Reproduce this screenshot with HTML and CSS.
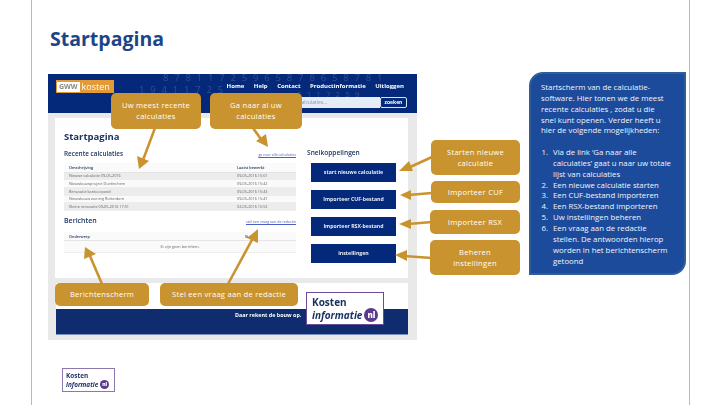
FILE: index.html
```html
<!DOCTYPE html>
<html lang="nl">
<head>
  <meta charset="UTF-8">
  <title>Startpagina</title>
  <link rel="stylesheet" href="styles.css">
</head>
<body>
<div class="slide">
  <h1 class="slide-title">Startpagina</h1>

  <div class="shot">
    <div class="shot-head">
      <div class="digits">
        <span>8 7 8 1 1 7 2 5 9 6 5 8 7 8 6 5 8 7 8 1</span>
        <span class="digits-two">1 9 4 1 1 7 2 5</span>
        <span class="digits-three">8 1 1 7 2 5 9</span>
      </div>
      <div class="head-row">
        <div class="logo-gww"><b>GWW</b><span>kosten</span></div>
        <nav class="nav">
          <span>Home</span><span>Help</span><span>Contact</span><span>Productinformatie</span><span>Uitloggen</span>
        </nav>
      </div>
      <div class="search-row">
        <div class="search-field">calculaties...</div>
        <div class="search-btn">zoeken</div>
      </div>
    </div>

    <div class="panel">
      <div class="panel-main">
        <h2 class="page-title">Startpagina</h2>
        <div class="sec-head">
          <h3>Recente calculaties</h3>
          <a class="sec-link">ga naar alle calculaties</a>
        </div>
        <table class="tbl">
          <tr><th>Omschrijving</th><th class="col-date">Laatst bewerkt</th></tr>
          <tr class="odd"><td>Nieuwe calculatie 09-05-2016</td><td class="col-date">09-05-2016 15:01</td></tr>
          <tr><td>Nieuwbouwproject Doetinchem</td><td class="col-date">09-05-2016 15:42</td></tr>
          <tr class="odd"><td>Renovatie kantoorpand</td><td class="col-date">09-05-2016 15:43</td></tr>
          <tr><td>Nieuwbouw woning Rotterdam</td><td class="col-date">09-05-2016 15:47</td></tr>
          <tr class="odd"><td>Kleine renovatie 09-05-2016 17:51</td><td class="col-date">02-05-2016 15:52</td></tr>
        </table>
        <div class="sec-head sec-head-msg">
          <h3 class="big">Berichten</h3>
          <a class="sec-link">stel een vraag aan de redactie</a>
        </div>
        <table class="tbl tbl-msg">
          <tr><th>Onderwerp</th><th class="col-date col-status">Status</th></tr>
          <tr class="empty"><td colspan="2">Er zijn geen berichten.</td></tr>
        </table>
      </div>
      <div class="panel-side">
        <h3>Snelkoppelingen</h3>
        <div class="quick">start nieuwe calculatie</div>
        <div class="quick">Importeer CUF-bestand</div>
        <div class="quick">Importeer RSX-bestand</div>
        <div class="quick">instellingen</div>
      </div>
    </div>

    <div class="shot-foot">
      <div class="foot-white"></div>
      <div class="foot-blue"><span>Daar rekent de bouw op.</span></div>
      <div class="ki-logo ki-big">
        <div class="ki-top">Kosten</div>
        <div class="ki-bot"><i>informatie</i><b>nl</b></div>
      </div>
    </div>
  </div>

  <div class="ki-logo ki-small">
    <div class="ki-top">Kosten</div>
    <div class="ki-bot"><i>informatie</i><b>nl</b></div>
  </div>

  <svg class="arrows" width="720" height="405" viewBox="0 0 720 405">
    <g stroke="#c9932f" stroke-width="2.6" fill="#c9932f">
      <line x1="155" y1="128" x2="143" y2="160"/>
      <line x1="253" y1="128" x2="263" y2="142"/>
      <line x1="432" y1="157" x2="408" y2="168"/>
      <line x1="432" y1="193" x2="408" y2="195"/>
      <line x1="432" y1="222" x2="408" y2="224"/>
      <line x1="432" y1="258" x2="404" y2="256"/>
      <line x1="102" y1="284" x2="90" y2="256"/>
      <line x1="228" y1="284" x2="253" y2="238"/>
    </g>
    <g fill="#c9932f">
      <polygon points="139,169 137,156 149,161"/>
      <polygon points="268,147 256,141 266,134"/>
      <polygon points="399,171 409,161 413,171"/>
      <polygon points="400,195 411,190 411,200"/>
      <polygon points="399,224 411,219 411,229"/>
      <polygon points="395,255 407,250 407,261"/>
      <polygon points="85,247 96,254 84,259"/>
      <polygon points="258,229 258,243 247,238"/>
    </g>
  </svg>

  <div class="call c-recent">Uw meest recente<br>calculaties</div>
  <div class="call c-all">Ga naar al uw<br>calculaties</div>
  <div class="call c-start">Starten nieuwe<br>calculatie</div>
  <div class="call c-cuf">Importeer CUF</div>
  <div class="call c-rsx">Importeer RSX</div>
  <div class="call c-inst">Beheren<br>instellingen</div>
  <div class="call c-msg">Berichtenscherm</div>
  <div class="call c-ask">Stel een vraag aan de redactie</div>

  <div class="note">
    <p>Startscherm van de calculatie-<br>software. Hier tonen we de meest<br>recente calculaties , zodat u die<br>snel kunt openen. Verder heeft u<br>hier de volgende mogelijkheden:</p>
    <ol>
      <li>Via de link ‘Ga naar alle<br>calculaties’ gaat u naar uw totale<br>lijst van calculaties</li>
      <li>Een nieuwe calculatie starten</li>
      <li>Een CUF-bestand importeren</li>
      <li>Een RSX-bestand importeren</li>
      <li>Uw instellingen beheren</li>
      <li>Een vraag aan de redactie<br>stellen. De antwoorden hierop<br>worden in het berichtenscherm<br>getoond</li>
    </ol>
  </div>
</div>
</body>
</html>
```

FILE: styles.css
```css
* {
  box-sizing: border-box;
}
html, body {
  margin: 0;
  padding: 0;
}
body {
  width: 720px;
  height: 405px;
  overflow: hidden;
  background: #fff;
  font-family: "Open Sans", "Noto Sans", sans-serif;
}
.slide {
  position: relative;
  width: 659px;
  height: 405px;
  margin-left: 31px;
  border-left: 1px solid #a9bcd6;
  border-right: 1px solid #a9bcd6;
  padding: 26px 0 0 16px;
}
.slide-title {
  margin: 0 0 0 2px;
  font-size: 19.5px;
  line-height: 26px;
  font-weight: 700;
  color: #1c4587;
}
.shot {
  width: 369px;
  height: 266px;
  margin-top: 22px;
  background: #e9e9e9;
  filter: blur(0.3px);
}
.shot-head {
  position: relative;
  height: 39px;
  background: #04297a;
  overflow: hidden;
}
.digits {
  position: absolute;
  top: 0;
  left: 115px;
  color: #2f5096;
  font-size: 9.5px;
  line-height: 8px;
  white-space: nowrap;
}
.digits span {
  display: block;
  letter-spacing: 1.68px;
}
.digits .digits-two {
  position: absolute;
  left: -24px;
  top: 12px;
}
.digits .digits-three {
  position: absolute;
  left: 134px;
  top: 16px;
  font-size: 8px;
  letter-spacing: 1.5px;
}
.head-row {
  position: relative;
  display: flex;
  justify-content: space-between;
  padding: 6px 13px 0 8px;
}
.logo-gww {
  display: flex;
  align-items: center;
  width: 58px;
  height: 13px;
  background: #e19a35;
  color: #fff;
  font-size: 9px;
  padding: 1px;
}
.logo-gww b {
  background: #fff;
  color: #8a8a8a;
  font-size: 7px;
  padding: 0 2px;
  line-height: 10px;
  margin-right: 2px;
}
.nav {
  display: flex;
  gap: 9.5px;
  color: #fff;
  font-size: 6px;
  line-height: 8px;
  font-weight: 700;
  padding-top: 2px;
}
.search-row {
  position: relative;
  display: flex;
  justify-content: flex-end;
  padding: 4px 10px 0 0;
}
.search-field {
  width: 120px;
  height: 11px;
  background: #e6ecf6;
  color: #8a93a8;
  font-size: 5px;
  line-height: 11px;
  padding-left: 39px;
}
.search-btn {
  width: 27px;
  height: 11px;
  background: #04297a;
  border: 1px solid #d7e0ef;
  border-radius: 2px;
  color: #fff;
  font-size: 5px;
  font-weight: 700;
  line-height: 9px;
  text-align: center;
}
.panel {
  display: flex;
  height: 160px;
  margin: 5px 9px 0 7px;
  background: #fff;
  padding: 12px 0 0 9px;
}
.panel-main {
  width: 232px;
}
.page-title {
  margin: 0;
  font-size: 9.5px;
  line-height: 14px;
  color: #17305f;
}
.sec-head {
  display: flex;
  justify-content: space-between;
  align-items: flex-end;
  margin-top: 5px;
  height: 10px;
}
.sec-head h3,
.panel-side h3 {
  margin: 0;
  font-size: 6.4px;
  font-weight: 600;
  line-height: 10px;
  color: #17305f;
}
.sec-head .big {
  font-size: 7px;
}
.sec-head.sec-head-msg {
  margin-top: 5px;
}
.sec-link {
  color: #4a5fc0;
  font-size: 3.6px;
  text-decoration: underline;
  line-height: 8px;
}
.tbl {
  width: 100%;
  margin-top: 4px;
  border-collapse: collapse;
  background: #fafafa;
  font-size: 3.8px;
  color: #666;
}
.tbl-msg {
  margin-top: 6px;
}
.tbl th {
  text-align: left;
  color: #17305f;
  font-weight: 600;
  height: 9px;
  padding: 0 5px;
  border-bottom: 1px solid #e4e4e4;
}
.tbl td {
  height: 7.7px;
  padding: 0 5px;
  white-space: nowrap;
  border-bottom: 1px solid #ededed;
}
.tbl .col-date {
  width: 59px;
  padding: 0;
}
.tbl .col-status {
  padding-left: 8px;
}
.tbl .odd td {
  background: #ececec;
}
.tbl .empty td {
  height: 12px;
  text-align: center;
}
.panel-side {
  padding: 18px 0 0 11px;
  width: 112px;
}
.panel-side h3 {
  margin-bottom: 5px;
  font-size: 6.6px;
}
.quick {
  width: 85px;
  height: 19px;
  margin: 0 0 8px 4px;
  background: #04297a;
  color: #e8ecf5;
  font-size: 5.2px;
  font-weight: 700;
  line-height: 19px;
  text-align: center;
}
.shot-foot {
  position: relative;
  height: 62px;
  margin: 0 9px 0 8px;
  padding-top: 5px;
}
.foot-white {
  height: 26px;
  background: #fff;
}
.foot-blue {
  height: 26px;
  background: #0f2d6e;
  border-bottom: 1px solid #7f92c4;
  color: #fff;
  font-size: 5.4px;
  line-height: 8px;
  font-weight: 700;
  padding: 2px 0 0 179px;
}
.ki-logo {
  background: #fff;
  border: 1px solid #6b4b97;
  color: #17305f;
  font-weight: 700;
}
.ki-big {
  position: absolute;
  left: 250px;
  top: 14px;
  width: 78px;
  height: 33px;
  border-width: 1.5px;
  padding: 3px 0 0 5px;
  font-size: 10px;
  line-height: 12px;
}
.ki-top, .ki-bot {
  white-space: nowrap;
}
.ki-bot {
  display: flex;
  align-items: center;
  gap: 2px;
}
.ki-bot b {
  display: inline-block;
  border-radius: 50%;
  background: #5a3a8c;
  color: #fff;
  text-align: center;
}
.ki-big .ki-bot b {
  width: 14px;
  height: 14px;
  font-size: 8px;
  line-height: 13px;
}
.ki-small {
  position: absolute;
  left: 30px;
  top: 368px;
  width: 53px;
  height: 24px;
  padding: 3px 0 0 3px;
  font-size: 6.4px;
  line-height: 8px;
  border-color: #8d78ad;
  filter: blur(0.3px);
}
.ki-small .ki-bot b {
  width: 9px;
  height: 9px;
  font-size: 5px;
  line-height: 8px;
}
.arrows {
  position: absolute;
  left: -32px;
  top: 0;
}
.call {
  position: absolute;
  display: flex;
  align-items: center;
  justify-content: center;
  text-align: center;
  background: #c9932f;
  border-radius: 5px;
  color: #fff;
  font-size: 7.6px;
  line-height: 11px;
  letter-spacing: 0.25px;
}
.c-recent { left: 79px; top: 93px; width: 90px; height: 36px; }
.c-all { left: 178px; top: 93px; width: 92px; height: 36px; }
.c-start { left: 399px; top: 140px; width: 89px; height: 35px; }
.c-cuf { left: 399px; top: 181px; width: 89px; height: 22px; }
.c-rsx { left: 398px; top: 210px; width: 90px; height: 24px; }
.c-inst { left: 398px; top: 240px; width: 90px; height: 35px; }
.c-msg { left: 23px; top: 283px; width: 94px; height: 23px; }
.c-ask { left: 128px; top: 283px; width: 138px; height: 23px; }
.note {
  position: absolute;
  left: 497px;
  top: 72px;
  width: 157px;
  height: 203px;
  background: #1d4b9b;
  border: 2px solid #2f5f9a;
  border-radius: 14px 0 14px 0;
  padding: 8px 4px 0 10px;
  color: #f2f5fb;
  font-size: 7.8px;
  line-height: 10.85px;
}
.note p {
  margin: 0 0 10.85px;
  white-space: nowrap;
}
.note ol {
  margin: 0;
  padding-left: 9px;
}
.note li {
  padding-left: 3px;
  white-space: nowrap;
}
```
